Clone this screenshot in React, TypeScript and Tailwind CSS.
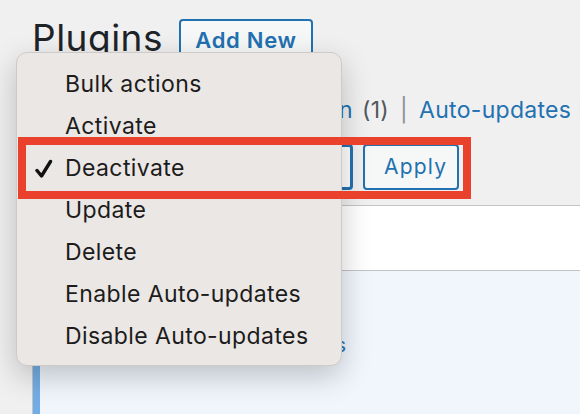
import React from "react";

const items = [
  "Bulk actions",
  "Activate",
  "Deactivate",
  "Update",
  "Delete",
  "Enable Auto-updates",
  "Disable Auto-updates",
];

export default function App() {
  return (
    <div
      className="relative w-[580px] h-[414px] overflow-hidden bg-[#f0f0f1]"
      style={{ fontFamily: "Inter, 'Noto Sans', sans-serif" }}
    >
      {/* header */}
      <div className="flex items-start pt-[19px] pl-[32px] gap-[16px]">
        <h1 className="mt-[0px] text-[37px] leading-none font-normal text-[#1d2327] tracking-[0.5px]">
          Plugins
        </h1>
        <a className="flex h-[43px] w-[134px] items-center justify-center rounded-[4px] border-2 border-[#2271b1] bg-[#f6f7f7] text-[22px] font-semibold tracking-[0.7px] text-[#2271b1]">
          Add New
        </a>
      </div>

      {/* subsubsub */}
      <div className="mt-[34px] flex h-[28px] items-center whitespace-nowrap text-[23px] leading-[28px] tracking-[0.3px]">
        <div className="flex w-[353px] shrink-0 justify-end overflow-hidden">
          <span className="text-[#2271b1]">All (6)</span>
          <span className="mx-[13px] text-[#8c8f94]">|</span>
          <span className="text-[#2271b1]">Drop-in</span>
        </div>
        <span className="ml-[9px] text-[#50575e]">(1)</span>
        <span className="mx-[11px] text-[#8c8f94]">|</span>
        <span className="text-[#2271b1]">Auto-updates</span>
        <span className="ml-[7px] text-[#2271b1]">Disabled (6)</span>
      </div>

      {/* toolbar */}
      <div className="mt-[20px] flex h-[46px] items-stretch pl-[33px]">
        <div className="w-[320px] rounded-[4px] border-[3px] border-[#2271b1] bg-white" />
        <div className="ml-[10px] flex w-[96px] items-center rounded-[4px] border-2 border-[#2271b1] bg-[#f6f7f7] pl-[19px] text-[21px] tracking-[1.2px] text-[#2271b1]">
          Apply
        </div>
      </div>

      {/* table */}
      <div className="mt-[15px] ml-[32px] border-l border-t border-[#c3c4c7]">
        <div className="h-[65px] border-b border-[#c3c4c7] bg-white" />
        <div className="flex h-[200px] bg-[#f0f6fc]">
          <div className="w-[7px] shrink-0 bg-[#72aee6]" />
          <div className="w-[306px] shrink-0 pt-[60px] text-right text-[20px] leading-[28px] text-[#2271b1] whitespace-nowrap overflow-hidden">
            View details
          </div>
        </div>
      </div>

      {/* native select menu */}
      <div className="absolute left-[16px] top-[52px] w-[326px] h-[314px] rounded-[11px] border border-[#cfcac7] bg-[#ebe7e4] pt-[10px] shadow-[0_10px_30px_rgba(0,0,0,0.22)]">
        {items.map((label) => (
          <div
            key={label}
            className="relative h-[42px] pl-[48px] text-[23px] leading-[42px] tracking-[0.4px] text-[#1c1c1c]"
          >
            {label === "Deactivate" && (
              <svg
                className="absolute left-[18px] top-[12px]"
                width="18"
                height="20"
                viewBox="0 0 18 20"
              >
                <path
                  d="M2 11.5 L6.5 17 L15.5 2.5"
                  fill="none"
                  stroke="#111"
                  strokeWidth="3.4"
                  strokeLinecap="round"
                  strokeLinejoin="round"
                />
              </svg>
            )}
            {label}
          </div>
        ))}
      </div>

      {/* red highlight annotation */}
      <div className="absolute left-[18px] top-[137px] w-[453px] h-[62px] border-[8px] border-[#e9412b]" />
    </div>
  );
}
